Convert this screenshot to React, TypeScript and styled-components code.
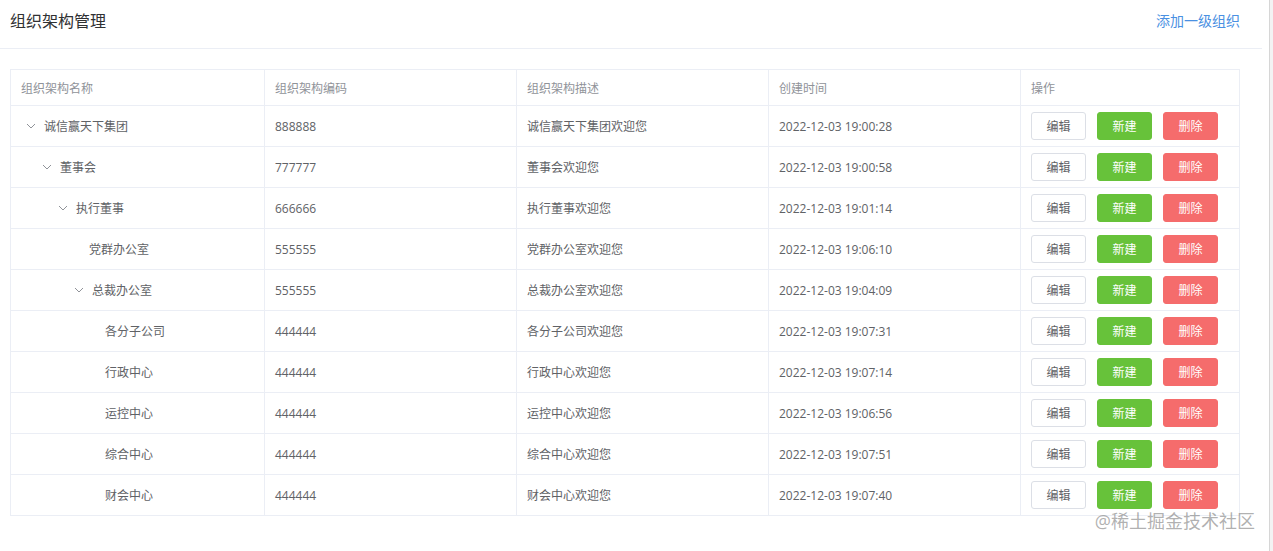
import React, { FC } from 'react'
import styled, { createGlobalStyle } from 'styled-components'

type Org = {
  name: string
  code: string
  desc: string
  time: string
  level: number
  expandable: boolean
}

const rows: Org[] = [
  { name: '诚信赢天下集团', code: '888888', desc: '诚信赢天下集团欢迎您', time: '2022-12-03 19:00:28', level: 0, expandable: true },
  { name: '董事会', code: '777777', desc: '董事会欢迎您', time: '2022-12-03 19:00:58', level: 1, expandable: true },
  { name: '执行董事', code: '666666', desc: '执行董事欢迎您', time: '2022-12-03 19:01:14', level: 2, expandable: true },
  { name: '党群办公室', code: '555555', desc: '党群办公室欢迎您', time: '2022-12-03 19:06:10', level: 3, expandable: false },
  { name: '总裁办公室', code: '555555', desc: '总裁办公室欢迎您', time: '2022-12-03 19:04:09', level: 3, expandable: true },
  { name: '各分子公司', code: '444444', desc: '各分子公司欢迎您', time: '2022-12-03 19:07:31', level: 4, expandable: false },
  { name: '行政中心', code: '444444', desc: '行政中心欢迎您', time: '2022-12-03 19:07:14', level: 4, expandable: false },
  { name: '运控中心', code: '444444', desc: '运控中心欢迎您', time: '2022-12-03 19:06:56', level: 4, expandable: false },
  { name: '综合中心', code: '444444', desc: '综合中心欢迎您', time: '2022-12-03 19:07:51', level: 4, expandable: false },
  { name: '财会中心', code: '444444', desc: '财会中心欢迎您', time: '2022-12-03 19:07:40', level: 4, expandable: false },
]

const columns = ['组织架构名称', '组织架构编码', '组织架构描述', '创建时间', '操作']

const Arrow: FC = () => (
  <svg width='10' height='10' viewBox='0 0 10 10'>
    <path d='M1 3 L5 7 L9 3' fill='none' stroke='#909399' strokeWidth='1' />
  </svg>
)

export default function App() {
  return (
    <>
      <GlobalStyle />
      <Page>
        <Main>
          <Header>
            <Title>组织架构管理</Title>
            <AddLink>添加一级组织</AddLink>
          </Header>

          <Table>
            <HeadRow>
              {columns.map(c => (
                <HeadCell key={c}>{c}</HeadCell>
              ))}
            </HeadRow>
            {rows.map(r => (
              <Row key={r.name}>
                <Cell>
                  <Indent level={r.level} />
                  {r.expandable ? (
                    <ExpandIcon>
                      <Arrow />
                    </ExpandIcon>
                  ) : (
                    <Placeholder />
                  )}
                  {r.name}
                </Cell>
                <Cell>{r.code}</Cell>
                <Cell>{r.desc}</Cell>
                <Cell>{r.time}</Cell>
                <Cell>
                  <Actions>
                    <Button kind='plain'>编辑</Button>
                    <Button kind='success'>新建</Button>
                    <Button kind='danger'>删除</Button>
                  </Actions>
                </Cell>
              </Row>
            ))}
          </Table>
        </Main>
        <SideStrip />
        <Watermark>@稀土掘金技术社区</Watermark>
      </Page>
    </>
  )
}

const GlobalStyle = createGlobalStyle`
  html, body {
    margin: 0;
    padding: 0;
    background: #fff;
  }

  body {
    font-family: "Open Sans", "Noto Sans CJK SC", sans-serif;
    font-size: 12px;
    color: #606266;
  }
`

const Page = styled.div`
  position: relative;
  display: flex;

  width: 1273px;
  height: 551px;
  overflow: hidden;
`

const Main = styled.div`
  width: 1262px;
`

const SideStrip = styled.div`
  flex: 1;

  margin-left: 7px;
  background: #f3f3f3;
  border-left: 1px solid #d6d6d6;
`

const Header = styled.div`
  display: flex;
  align-items: center;
  justify-content: space-between;

  height: 40px;
  padding: 0 22px 8px 10px;
  border-bottom: 1px solid #ebeef5;
`

const Title = styled.div`
  font-size: 16px;
  color: #303133;
`

const AddLink = styled.a`
  cursor: pointer;

  font-size: 14px;
  color: #4a90e2;
`

const Table = styled.div`
  margin: 20px 22px 0 10px;
  border: 1px solid #ebeef5;
  border-bottom: none;
`

const gridCols = '253px 252px 252px 252px 1fr'

const HeadRow = styled.div`
  display: grid;
  grid-template-columns: ${gridCols};

  height: 35px;
  border-bottom: 1px solid #ebeef5;
`

const Row = styled(HeadRow)`
  height: 40px;
`

const HeadCell = styled.div`
  display: flex;
  align-items: center;

  padding-left: 10px;
  color: #909399;
  border-left: 1px solid #ebeef5;

  &:first-child {
    border-left: none;
  }
`

const Cell = styled(HeadCell)`
  color: #606266;
`

const Indent = styled.span<{ level: number }>`
  display: inline-block;
  width: ${p => p.level * 16}px;
  flex-shrink: 0;
`

const ExpandIcon = styled.span`
  display: inline-flex;
  align-items: center;
  justify-content: center;

  width: 20px;
  height: 20px;
  margin-right: 3px;
  flex-shrink: 0;
`

const Placeholder = styled.span`
  display: inline-block;
  width: 20px;
  flex-shrink: 0;
`

const Actions = styled.div`
  display: flex;
  gap: 11px;
`

const buttonColors = {
  plain: { bg: '#fff', border: '#dcdfe6', color: '#606266' },
  success: { bg: '#67c23a', border: '#67c23a', color: '#fff' },
  danger: { bg: '#f56c6c', border: '#f56c6c', color: '#fff' },
}

const Button = styled.button<{ kind: keyof typeof buttonColors }>`
  cursor: pointer;

  width: 55px;
  height: 28px;
  padding: 0;

  font-family: inherit;
  font-size: 12px;
  color: ${p => buttonColors[p.kind].color};
  background: ${p => buttonColors[p.kind].bg};
  border: 1px solid ${p => buttonColors[p.kind].border};
  border-radius: 3px;
`

const Watermark = styled.div`
  position: absolute;
  right: 18px;
  bottom: 18px;

  font-size: 18px;
  color: rgba(110, 110, 110, 0.55);
  pointer-events: none;
`
